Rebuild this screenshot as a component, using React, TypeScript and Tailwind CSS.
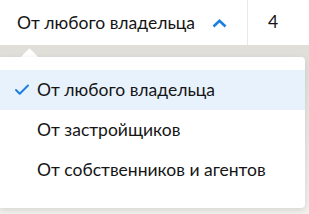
import { Check } from "lucide-react";

const items = ["От любого владельца", "От застройщиков", "От собственников и агентов"];

export default function App() {
    return (
        <div className="w-[309px] h-[214px] overflow-hidden bg-white text-[#151515] font-['Lato',sans-serif]">
            {/* верхняя панель фильтра */}
            <div className="flex h-[45px] bg-white">
                <div className="flex w-[248px] items-center border-r border-[#e8e8e8] pl-[17px]">
                    <span className="text-[17.5px] leading-none">От любого владельца</span>
                    <svg className="ml-[17px] mt-[1px]" width="15" height="9" viewBox="0 0 15 9" fill="none">
                        <path d="M1.5 7.5 L7.5 1.8 L13.5 7.5" stroke="#1a7fe0" strokeWidth="2.6" />
                    </svg>
                </div>
                <div className="flex flex-1 items-center pl-[20px] text-[17.5px]">4</div>
            </div>

            {/* выпадающий список */}
            <div className="relative h-[169px] bg-[linear-gradient(#dfded9,#f2f1ed)] pt-[12px] pr-[4px]">
                <div className="absolute left-[23px] top-[6px] h-[13px] w-[13px] rotate-45 bg-white" />
                <div className="relative rounded-r-[4px] bg-white pt-[13px] pb-[18px] shadow-[0_2px_6px_rgba(0,0,0,0.12)]">
                    {items.map((item, i) => (
                        <div
                            key={item}
                            className={`flex h-[40px] items-center text-[17.5px] ${i === 0 ? "bg-[#e8f2fc]" : ""}`}
                        >
                            <div className="flex w-[37px] justify-end pr-[6px]">
                                {i === 0 && <Check size={18} strokeWidth={2.6} color="#1a7fe0" />}
                            </div>
                            <span>{item}</span>
                        </div>
                    ))}
                </div>
            </div>
        </div>
    );
}
